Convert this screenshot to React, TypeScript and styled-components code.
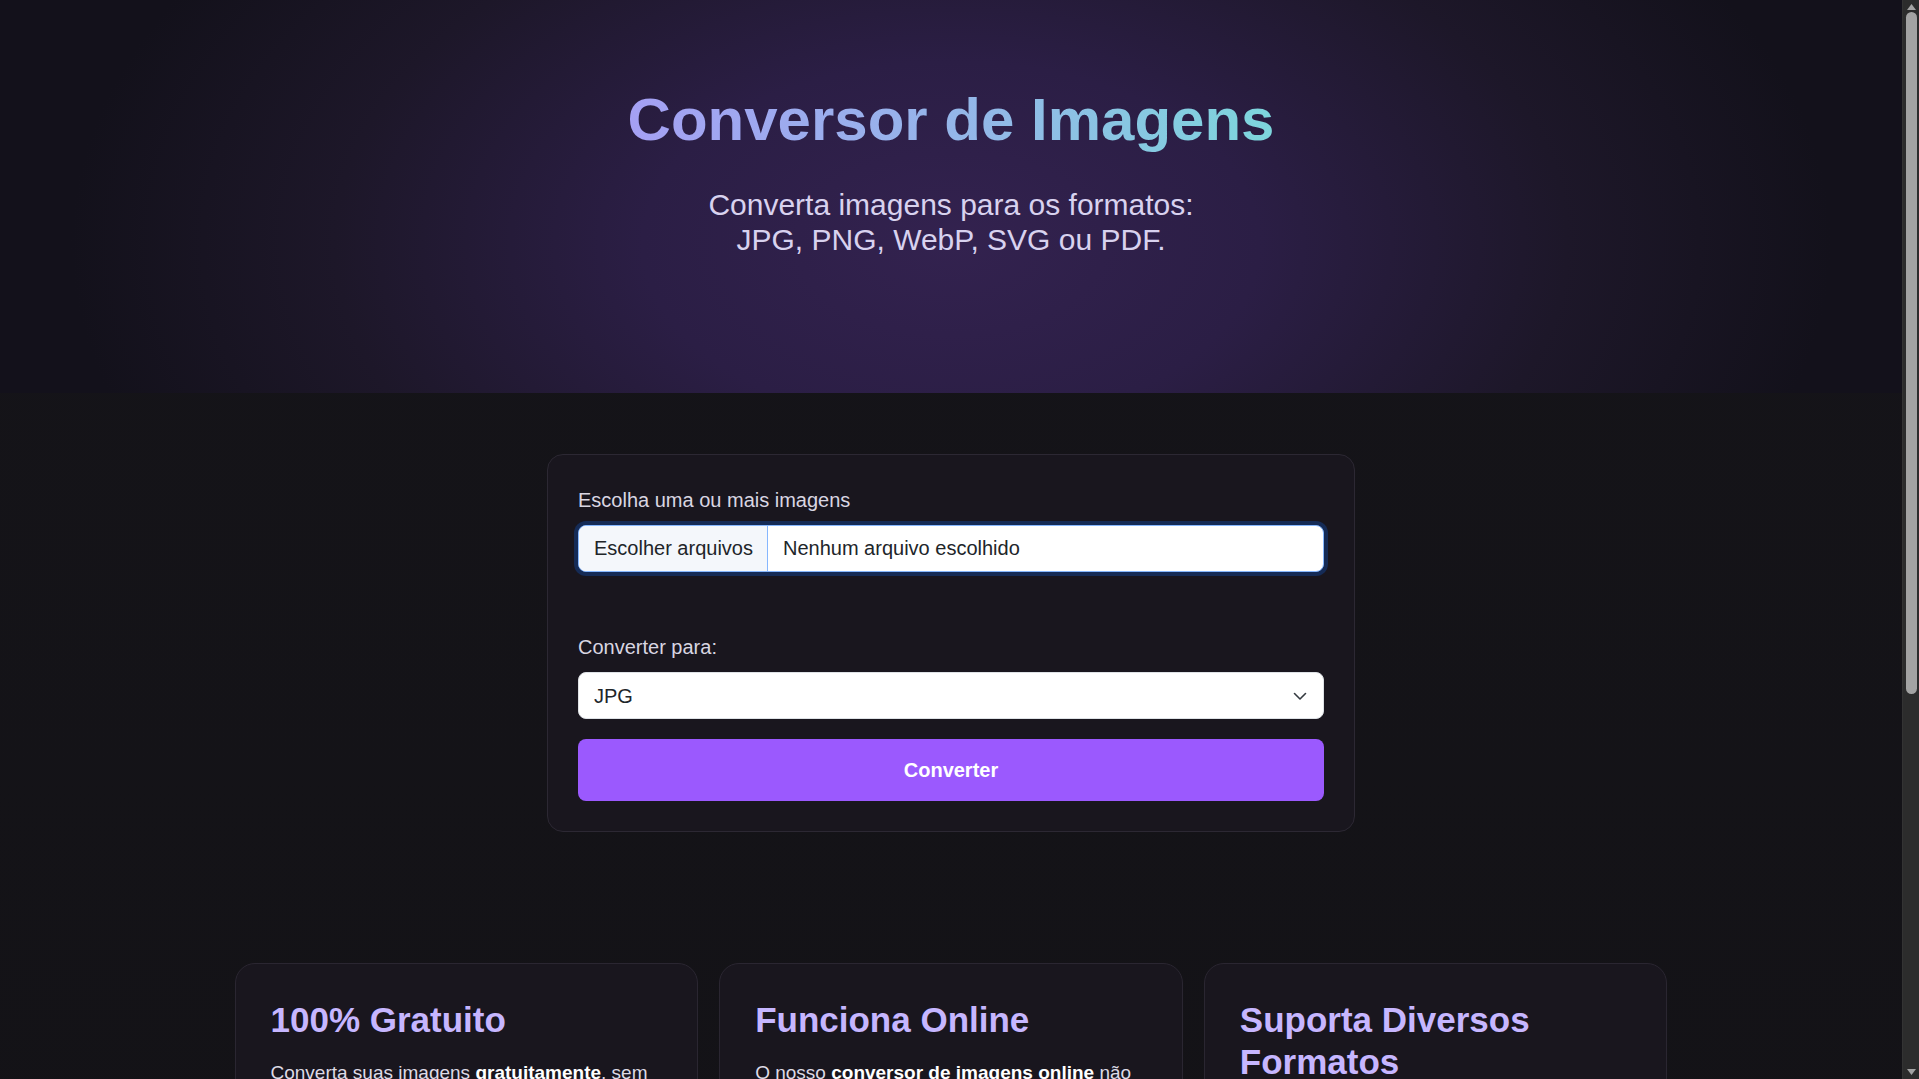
import React from "react";
import styled, { createGlobalStyle } from "styled-components";

const GlobalStyle = createGlobalStyle`
  html { color-scheme: dark; }
  body {
    margin: 0;
    background: #141318;
    font-family: "Liberation Sans", Arial, sans-serif;
    color: #dcd8e6;
  }
  * { box-sizing: border-box; }
`;

const Page = styled.div`
  display: flex;
  flex-direction: column;
  min-height: 100vh;
  padding-right: 17px;
  background: linear-gradient(180deg, #151419 0%, #131216 100%);
`;

/* Fake browser scrollbar drawn over the right edge, as in the screenshot */
const ScrollTrack = styled.div`
  position: fixed;
  top: 0;
  right: 0;
  bottom: 0;
  width: 17px;
  background: #2c2c2c;
  border-left: 1px solid #333;
  display: flex;
  flex-direction: column;
  align-items: center;
  justify-content: space-between;
  padding: 4px 0;
  z-index: 10;
`;

const ScrollThumb = styled.div`
  position: absolute;
  top: 12px;
  left: 3px;
  width: 11px;
  height: 682px;
  border-radius: 6px;
  background: #a3a3a3;
`;

const Arrow = styled.svg`
  width: 9px;
  height: 6px;
  display: block;
`;

const Hero = styled.header`
  display: flex;
  flex-direction: column;
  align-items: center;
  padding: 84px 0 136px;
  background:
    radial-gradient(ellipse 880px 520px at 50% 62%, #33224f 0%, #2b1e45 35%, #1d1729 70%, #13111b 100%);
`;

const Title = styled.h1`
  margin: 0;
  font-size: 60px;
  line-height: 72px;
  font-weight: 700;
  background: linear-gradient(90deg, #a5a0f4 0%, #93b8e8 55%, #7dd6dc 100%);
  -webkit-background-clip: text;
  background-clip: text;
  color: transparent;
`;

const Subtitle = styled.p`
  margin: 31px 0 0;
  font-size: 30px;
  line-height: 35px;
  text-align: center;
  color: #d8d2ef;
`;

const Main = styled.main`
  display: flex;
  flex-direction: column;
  align-items: center;
  padding-top: 61px;
`;

const ConvertCard = styled.form`
  width: 808px;
  padding: 30px;
  background: #19161e;
  border: 1px solid #2c2833;
  border-radius: 16px;
  display: flex;
  flex-direction: column;
`;

const Field = styled.div<{ $gap?: number }>`
  display: flex;
  flex-direction: column;
  margin-bottom: ${(p) => p.$gap ?? 0}px;
`;

const Label = styled.label`
  font-size: 20px;
  line-height: 30px;
  color: #d9d6e2;
  margin-bottom: 10px;
`;

const FileBox = styled.div`
  display: flex;
  align-items: stretch;
  height: 47px;
  background: #ffffff;
  border: 1px solid #86b7fe;
  border-radius: 8px;
  box-shadow: 0 0 0 4px #152b56;
  overflow: hidden;
  font-size: 20px;
  color: #212529;
`;

const FileButton = styled.span`
  display: flex;
  align-items: center;
  padding: 0 14px 0 15px;
  background: #f4f7fb;
  border-right: 1px solid #86b7fe;
`;

const FileName = styled.span`
  display: flex;
  align-items: center;
  padding-left: 15px;
`;

const SelectWrap = styled.div`
  position: relative;
  display: flex;
`;

const Select = styled.select`
  appearance: none;
  width: 100%;
  height: 47px;
  padding: 0 48px 0 15px;
  font-family: inherit;
  font-size: 20px;
  color: #212529;
  background: #ffffff;
  border: 1px solid #dee2e6;
  border-radius: 8px;
  color-scheme: light;
  outline: none;
`;

const Chevron = styled.svg`
  position: absolute;
  right: 16px;
  top: 50%;
  width: 16px;
  height: 16px;
  transform: translateY(-50%);
  pointer-events: none;
`;

const SubmitButton = styled.button`
  margin-top: 20px;
  height: 62px;
  border: none;
  border-radius: 8px;
  background: #9b59fe;
  color: #ffffff;
  font-family: inherit;
  font-size: 20px;
  font-weight: 700;
  cursor: pointer;
`;

const Features = styled.section`
  display: grid;
  grid-template-columns: repeat(3, 1fr);
  gap: 21px;
  width: 1433px;
  margin: 131px auto 160px;
`;

const FeatureCard = styled.article`
  padding: 35px;
  background: #19161e;
  border: 1px solid #2a2631;
  border-radius: 20px;
`;

const FeatureTitle = styled.h2`
  margin: 0 0 18px;
  font-size: 35px;
  line-height: 42px;
  font-weight: 700;
  color: #c6b6ff;
`;

const FeatureText = styled.p`
  margin: 0;
  font-size: 19px;
  line-height: 28.5px;
  color: #dedbe6;

  strong {
    color: #ffffff;
    font-weight: 700;
  }
`;

const Footer = styled.footer`
  margin-top: auto;
  padding: 70px 0;
  border-top: 1px solid #24212b;
  text-align: center;
  font-size: 16px;
  line-height: 24px;
  color: #8d8898;
`;

const features = [
  {
    title: "100% Gratuito",
    text: (
      <>
        Converta suas imagens <strong>gratuitamente</strong>, sem limites, sem
        cadastro e sem marcas d'água nos seus arquivos.
      </>
    ),
  },
  {
    title: "Funciona Online",
    text: (
      <>
        O nosso <strong>conversor de imagens online</strong> não precisa de
        instalação: tudo funciona direto no seu navegador.
      </>
    ),
  },
  {
    title: "Suporta Diversos Formatos",
    text: (
      <>
        Converta para <strong>JPG, PNG, WebP, SVG ou PDF</strong> de forma
        rápida e fácil, com ótima qualidade.
      </>
    ),
  },
];

export default function App() {
  return (
    <>
      <GlobalStyle />
      <Page>
        <Hero>
          <Title>Conversor de Imagens</Title>
          <Subtitle>
            Converta imagens para os formatos:
            <br />
            JPG, PNG, WebP, SVG ou PDF.
          </Subtitle>
        </Hero>

        <Main>
          <ConvertCard onSubmit={(e) => e.preventDefault()}>
            <Field $gap={60}>
              <Label>Escolha uma ou mais imagens</Label>
              <FileBox>
                <FileButton>Escolher arquivos</FileButton>
                <FileName>Nenhum arquivo escolhido</FileName>
              </FileBox>
            </Field>
            <Field>
              <Label>Converter para:</Label>
              <SelectWrap>
                <Select defaultValue="jpg">
                  <option value="jpg">JPG</option>
                  <option value="png">PNG</option>
                  <option value="webp">WebP</option>
                  <option value="svg">SVG</option>
                  <option value="pdf">PDF</option>
                </Select>
                <Chevron viewBox="0 0 16 16" fill="none">
                  <path
                    d="M2.5 5.5 8 11l5.5-5.5"
                    stroke="#343a40"
                    strokeWidth="1.6"
                    strokeLinecap="round"
                    strokeLinejoin="round"
                  />
                </Chevron>
              </SelectWrap>
            </Field>
            <SubmitButton type="submit">Converter</SubmitButton>
          </ConvertCard>

          <Features>
            {features.map((f) => (
              <FeatureCard key={f.title}>
                <FeatureTitle>{f.title}</FeatureTitle>
                <FeatureText>{f.text}</FeatureText>
              </FeatureCard>
            ))}
          </Features>
        </Main>

        <Footer>
          © 2024 Conversor de Imagens. Todos os direitos reservados.
        </Footer>
      </Page>

      <ScrollTrack aria-hidden="true">
        <Arrow viewBox="0 0 9 6">
          <path d="M4.5 0 9 6H0z" fill="#a3a3a3" />
        </Arrow>
        <ScrollThumb />
        <Arrow viewBox="0 0 9 6">
          <path d="M0 0h9L4.5 6z" fill="#a3a3a3" />
        </Arrow>
      </ScrollTrack>
    </>
  );
}
